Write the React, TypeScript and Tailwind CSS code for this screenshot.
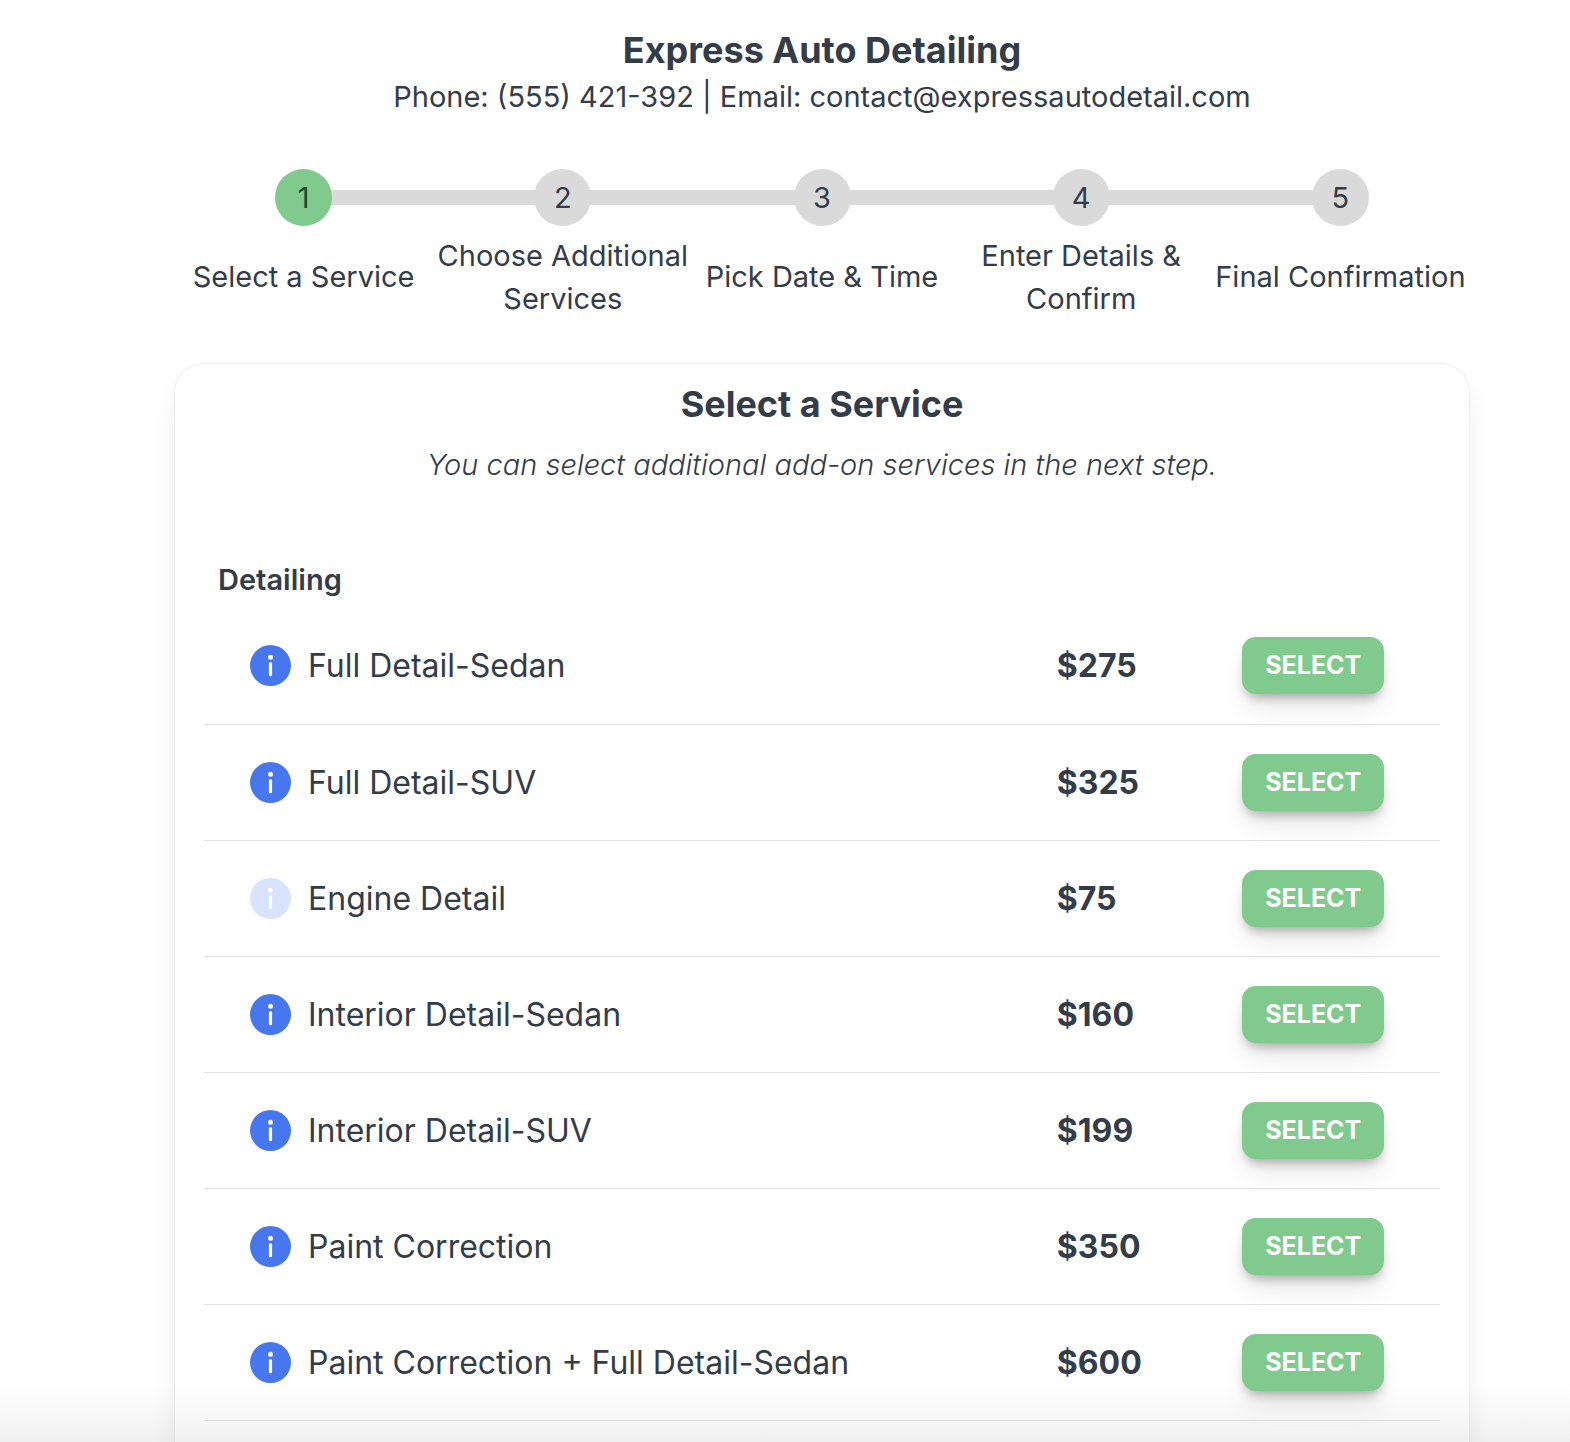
type Service = {
    name: string
    price: number
    hasInfo: boolean
}

const steps = [
    "Select a Service",
    "Choose Additional Services",
    "Pick Date & Time",
    "Enter Details & Confirm",
    "Final Confirmation",
]

const services: Service[] = [
    { name: "Full Detail-Sedan", price: 275, hasInfo: true },
    { name: "Full Detail-SUV", price: 325, hasInfo: true },
    { name: "Engine Detail", price: 75, hasInfo: false },
    { name: "Interior Detail-Sedan", price: 160, hasInfo: true },
    { name: "Interior Detail-SUV", price: 199, hasInfo: true },
    { name: "Paint Correction", price: 350, hasInfo: true },
    { name: "Paint Correction + Full Detail-Sedan", price: 600, hasInfo: true },
]

const InfoIcon = () => (
    <svg className="w-[41px] h-[41px]" viewBox="0 0 41 41" aria-hidden="true">
        <circle cx="20.5" cy="20.5" r="20.5" fill="#4777ee" />
        <circle cx="20.5" cy="12.3" r="2.5" fill="#fff" />
        <rect x="18.9" y="17.3" width="3.2" height="13.9" rx="1.2" fill="#fff" />
    </svg>
)

const Steps = (props: { current: number }) => {
    return (
        <ol className="grid grid-cols-5">
            {steps.map((label, i) => (
                <li key={label} className="flex flex-col items-center">
                    <div className="flex items-center w-full h-[72px]">
                        <span className={i === 0 ? "flex-1 h-[15px]" : "flex-1 h-[15px] bg-[#dadada]"} />
                        <span
                            className={
                                i + 1 === props.current
                                    ? "relative flex items-center justify-center w-[57px] h-[57px] -mx-2 rounded-full bg-[#80ca8d] text-[#1d4a2c]"
                                    : "relative flex items-center justify-center w-[57px] h-[57px] -mx-2 rounded-full bg-[#dadada]"
                            }
                        >
                            {i + 1}
                        </span>
                        <span className={i === steps.length - 1 ? "flex-1 h-[15px]" : "flex-1 h-[15px] bg-[#dadada]"} />
                    </div>
                    <div className="flex items-center justify-center h-[87px] text-center">{label}</div>
                </li>
            ))}
        </ol>
    )
}

const ServiceRow = (props: { service: Service }) => {
    const { name, price, hasInfo } = props.service
    return (
        <tr className="h-[116px] border-b border-[#e2e3e5]">
            <th scope="row" className="pl-[46px] font-normal text-left">
                <div className="flex items-center gap-[17px]">
                    <button
                        type="button"
                        aria-label={"About " + name}
                        disabled={!hasInfo}
                        className="rounded-full cursor-pointer disabled:opacity-20 disabled:cursor-default"
                    >
                        <InfoIcon />
                    </button>
                    {name}
                </div>
            </th>
            <td className="font-bold">${price}</td>
            <td>
                <button
                    type="button"
                    className="flex items-center justify-center w-[142px] h-[57px] rounded-[14px] bg-[#80ca8d] text-white text-[25px] font-bold cursor-pointer shadow-[0_18px_27px_-5px_rgba(0,0,0,0.1),0_7px_11px_-4px_rgba(0,0,0,0.3)]"
                >
                    SELECT
                </button>
            </td>
        </tr>
    )
}

export default function App() {
    return (
        <div className="relative flex flex-col min-h-screen overflow-hidden bg-white pt-[25px] pl-[174px] pr-[100px] font-['Inter','Liberation_Sans',sans-serif] text-[29px] leading-[43px] text-[#343c48]">
            <header className="text-center">
                <h1 className="text-[36px] leading-[50px] font-bold">Express Auto Detailing</h1>
                <p>Phone: (555) 421-392 | Email: contact@expressautodetail.com</p>
            </header>

            <nav aria-label="Booking steps" className="mt-[43px]">
                <Steps current={1} />
            </nav>

            <main className="flex-1 mt-[43px] px-[29px] pt-[15px] rounded-t-[29px] border border-b-0 border-[#eeeeef] bg-white shadow-[0_18px_27px_-5px_rgba(0,0,0,0.1)]">
                <h2 className="text-[36px] leading-[50px] font-bold text-center">Select a Service</h2>
                <p className="mt-[14px] font-light italic text-center">You can select additional add-on services in the next step.</p>

                <h3 className="mt-[72px] ml-[14px] font-semibold">Detailing</h3>
                <table className="w-full mt-[7px] table-fixed text-[32px]">
                    <colgroup>
                        <col className="w-[69%]" />
                        <col className="w-[15%]" />
                        <col className="w-[16%]" />
                    </colgroup>
                    <tbody>
                        {services.map((s) => (
                            <ServiceRow key={s.name} service={s} />
                        ))}
                    </tbody>
                </table>
            </main>

            {/* fade at the bottom edge of the window */}
            <div className="absolute inset-x-0 bottom-0 h-14 pointer-events-none bg-linear-to-b from-transparent to-black/6" />
        </div>
    )
}
